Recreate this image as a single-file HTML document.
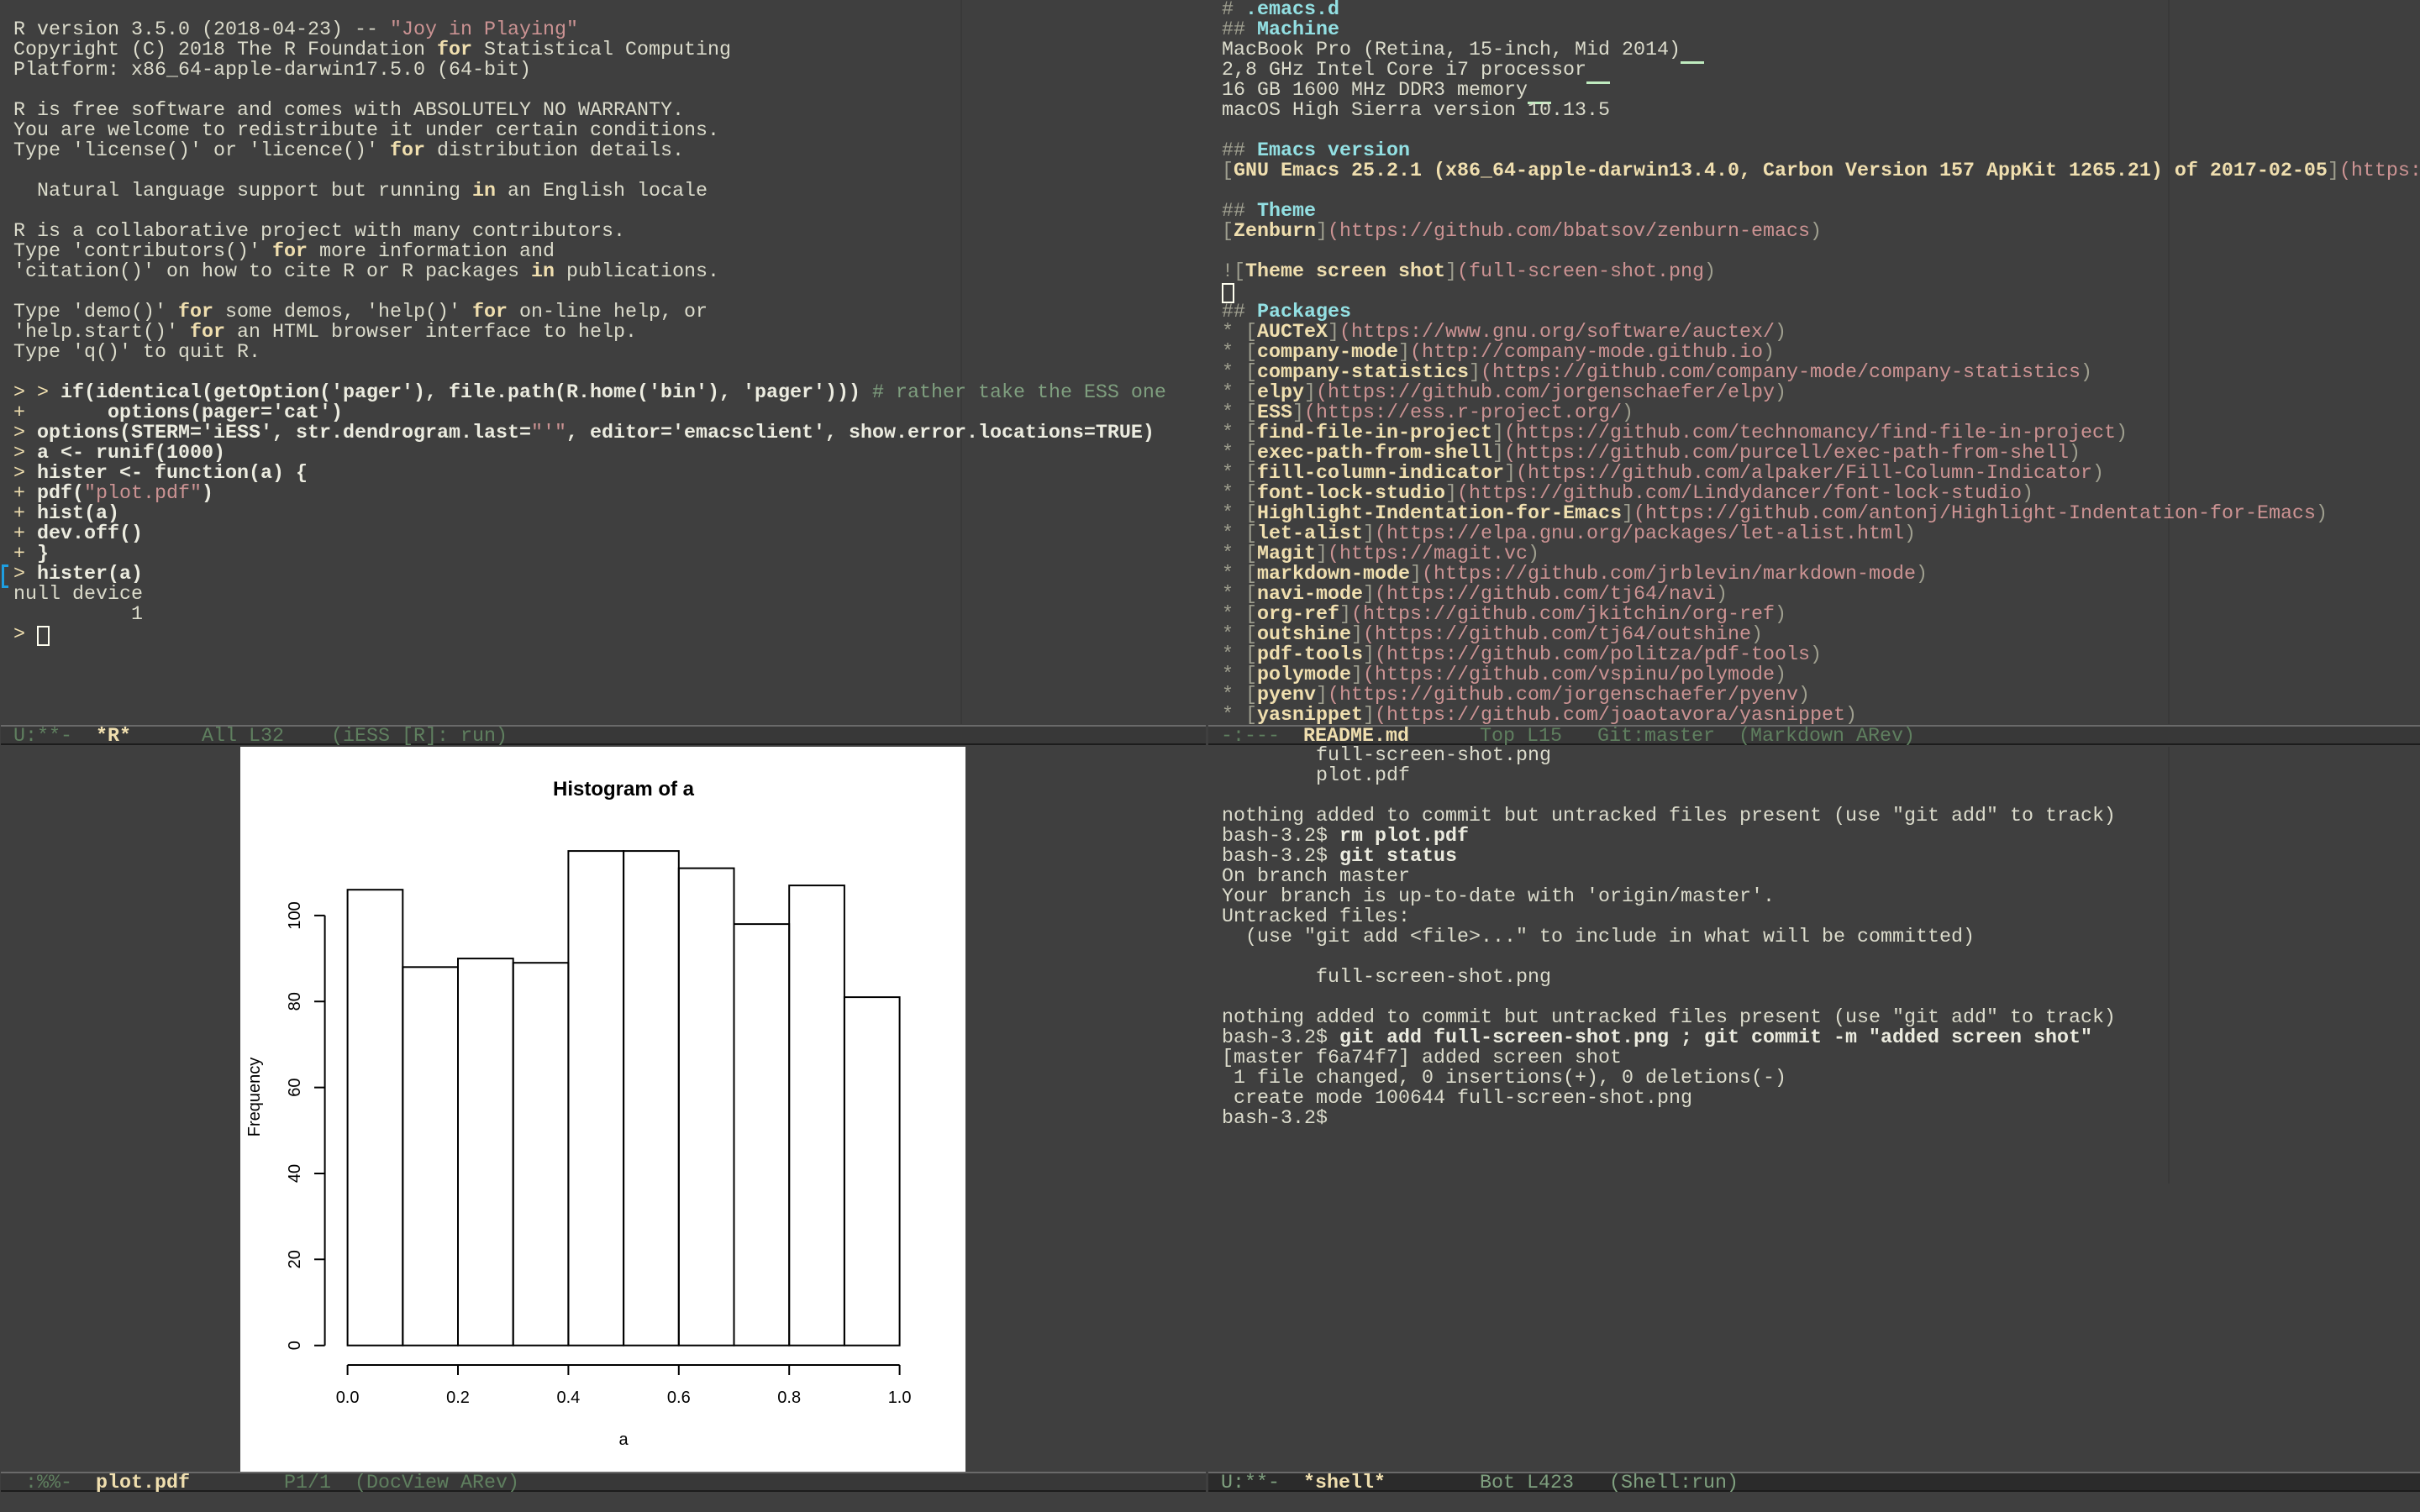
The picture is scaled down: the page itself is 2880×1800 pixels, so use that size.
<!DOCTYPE html>
<html><head><meta charset="utf-8">
<style>
html,body{margin:0;padding:0;}
body{width:2880px;height:1800px;background:#3f3f3f;position:relative;overflow:hidden;
font-family:"Liberation Mono",monospace;font-size:23.33px;color:#dcdccc;}
pre{margin:0;font:inherit;line-height:24px;white-space:pre;position:absolute;overflow:hidden;}
.k{color:#f0dfaf;font-weight:bold}
.b{font-weight:bold;color:#ecece0}
.s{color:#cc9393}
.c{color:#7f9f7f}
.h{color:#93e0e3;font-weight:bold}
.hm{color:#a0a090}
.g{color:#9f9f8f}
.l{color:#f0dfaf;font-weight:bold}
.u{color:#cc9393}
.p{color:#f0dfaf}
.tw{border-bottom:3px solid #bfebbf}
.ml{position:absolute;height:20px;background:#383838;border-top:2px solid #6a6a6a;border-bottom:2px solid #1c1c1c;color:#5f7f5f;}
.ml pre{position:static;line-height:20px;}
.ml.act{background:#2b2b2b;color:#7fa07f}
.bn{color:#f0dfaf;font-weight:bold}
.fc{position:absolute;width:2px;background:#393939}
</style></head><body>

<div class="fc" style="left:1143px;top:0;height:862px"></div>
<div class="fc" style="left:2580px;top:0;height:862px"></div>
<div class="fc" style="left:2580px;top:889px;height:520px"></div>

<pre style="left:16px;top:0;width:1420px;height:862px">

R version 3.5.0 (2018-04-23) -- <span class="s">"Joy in Playing"</span>
Copyright (C) 2018 The R Foundation <span class="k">for</span> Statistical Computing
Platform: x86_64-apple-darwin17.5.0 (64-bit)

R is free software and comes with ABSOLUTELY NO WARRANTY.
You are welcome to redistribute it under certain conditions.
Type 'license()' or 'licence()' <span class="k">for</span> distribution details.

  Natural language support but running <span class="k">in</span> an English locale

R is a collaborative project with many contributors.
Type 'contributors()' <span class="k">for</span> more information and
'citation()' on how to cite R or R packages <span class="k">in</span> publications.

Type 'demo()' <span class="k">for</span> some demos, 'help()' <span class="k">for</span> on-line help, or
'help.start()' <span class="k">for</span> an HTML browser interface to help.
Type 'q()' to quit R.

<span class="p">&gt; &gt; </span><span class="b">if(identical(getOption('pager'), file.path(R.home('bin'), 'pager')))</span> <span class="c"># rather take the ESS one</span>
<span class="p">+ </span><span class="b">      options(pager='cat')</span>
<span class="p">&gt; </span><span class="b">options(STERM='iESS', str.dendrogram.last=</span><span class="s">"'"</span><span class="b">, editor='emacsclient', show.error.locations=TRUE)</span>
<span class="p">&gt; </span><span class="b">a &lt;- runif(1000)</span>
<span class="p">&gt; </span><span class="b">hister &lt;- function(a) {</span>
<span class="p">+ </span><span class="b">pdf(</span><span class="s">"plot.pdf"</span><span class="b">)</span>
<span class="p">+ </span><span class="b">hist(a)</span>
<span class="p">+ </span><span class="b">dev.off()</span>
<span class="p">+ </span><span class="b">}</span>
<span class="p">&gt; </span><span class="b">hister(a)</span>
null device
          1
<span class="p">&gt; </span></pre>
<div style="position:absolute;left:44px;top:745px;width:11px;height:20px;border:2px solid #fffff0"></div>
<div style="position:absolute;left:2px;top:672px;width:5px;height:22px;border:3px solid #1e9ee0;border-right:none"></div>

<pre style="left:1454px;top:0;width:1426px;height:862px">
<span class="hm">#</span> <span class="h">.emacs.d</span>
<span class="hm">##</span> <span class="h">Machine</span>
MacBook Pro (Retina, 15-inch, Mid 2014)<span class="tw">  </span>
2,8 GHz Intel Core i7 processor<span class="tw">  </span>
16 GB 1600 MHz DDR3 memory<span class="tw">  </span>
macOS High Sierra version 10.13.5

<span class="hm">##</span> <span class="h">Emacs version</span>
<span class="g">[</span><span class="l">GNU Emacs 25.2.1 (x86_64-apple-darwin13.4.0, Carbon Version 157 AppKit 1265.21) of 2017-02-05</span><span class="g">]</span><span class="u">(https://www.gnu.org/software/emacs/</span>

<span class="hm">##</span> <span class="h">Theme</span>
<span class="g">[</span><span class="l">Zenburn</span><span class="g">]</span><span class="u">(https://github.com/bbatsov/zenburn-emacs</span><span class="g">)</span>

<span class="g">![</span><span class="l">Theme screen shot</span><span class="g">]</span><span class="u">(full-screen-shot.png</span><span class="g">)</span>

<span class="hm">##</span> <span class="h">Packages</span>
<span class="g">* [</span><span class="l">AUCTeX</span><span class="g">]</span><span class="u">(https://www.gnu.org/software/auctex/</span><span class="g">)</span>
<span class="g">* [</span><span class="l">company-mode</span><span class="g">]</span><span class="u">(http://company-mode.github.io</span><span class="g">)</span>
<span class="g">* [</span><span class="l">company-statistics</span><span class="g">]</span><span class="u">(https://github.com/company-mode/company-statistics</span><span class="g">)</span>
<span class="g">* [</span><span class="l">elpy</span><span class="g">]</span><span class="u">(https://github.com/jorgenschaefer/elpy</span><span class="g">)</span>
<span class="g">* [</span><span class="l">ESS</span><span class="g">]</span><span class="u">(https://ess.r-project.org/</span><span class="g">)</span>
<span class="g">* [</span><span class="l">find-file-in-project</span><span class="g">]</span><span class="u">(https://github.com/technomancy/find-file-in-project</span><span class="g">)</span>
<span class="g">* [</span><span class="l">exec-path-from-shell</span><span class="g">]</span><span class="u">(https://github.com/purcell/exec-path-from-shell</span><span class="g">)</span>
<span class="g">* [</span><span class="l">fill-column-indicator</span><span class="g">]</span><span class="u">(https://github.com/alpaker/Fill-Column-Indicator</span><span class="g">)</span>
<span class="g">* [</span><span class="l">font-lock-studio</span><span class="g">]</span><span class="u">(https://github.com/Lindydancer/font-lock-studio</span><span class="g">)</span>
<span class="g">* [</span><span class="l">Highlight-Indentation-for-Emacs</span><span class="g">]</span><span class="u">(https://github.com/antonj/Highlight-Indentation-for-Emacs</span><span class="g">)</span>
<span class="g">* [</span><span class="l">let-alist</span><span class="g">]</span><span class="u">(https://elpa.gnu.org/packages/let-alist.html</span><span class="g">)</span>
<span class="g">* [</span><span class="l">Magit</span><span class="g">]</span><span class="u">(https://magit.vc</span><span class="g">)</span>
<span class="g">* [</span><span class="l">markdown-mode</span><span class="g">]</span><span class="u">(https://github.com/jrblevin/markdown-mode</span><span class="g">)</span>
<span class="g">* [</span><span class="l">navi-mode</span><span class="g">]</span><span class="u">(https://github.com/tj64/navi</span><span class="g">)</span>
<span class="g">* [</span><span class="l">org-ref</span><span class="g">]</span><span class="u">(https://github.com/jkitchin/org-ref</span><span class="g">)</span>
<span class="g">* [</span><span class="l">outshine</span><span class="g">]</span><span class="u">(https://github.com/tj64/outshine</span><span class="g">)</span>
<span class="g">* [</span><span class="l">pdf-tools</span><span class="g">]</span><span class="u">(https://github.com/politza/pdf-tools</span><span class="g">)</span>
<span class="g">* [</span><span class="l">polymode</span><span class="g">]</span><span class="u">(https://github.com/vspinu/polymode</span><span class="g">)</span>
<span class="g">* [</span><span class="l">pyenv</span><span class="g">]</span><span class="u">(https://github.com/jorgenschaefer/pyenv</span><span class="g">)</span>
<span class="g">* [</span><span class="l">yasnippet</span><span class="g">]</span><span class="u">(https://github.com/joaotavora/yasnippet</span><span class="g">)</span></pre>
<div style="position:absolute;left:1454px;top:337px;width:11px;height:20px;border:2px solid #fffff0"></div>

<pre style="left:1454px;top:888px;width:1426px;height:862px">
        full-screen-shot.png
        plot.pdf

nothing added to commit but untracked files present (use "git add" to track)
bash-3.2$ <span class="b">rm plot.pdf</span>
bash-3.2$ <span class="b">git status</span>
On branch master
Your branch is up-to-date with 'origin/master'.
Untracked files:
  (use "git add &lt;file&gt;..." to include in what will be committed)

        full-screen-shot.png

nothing added to commit but untracked files present (use "git add" to track)
bash-3.2$ <span class="b">git add full-screen-shot.png ; git commit -m "added screen shot"</span>
[master f6a74f7] added screen shot
 1 file changed, 0 insertions(+), 0 deletions(-)
 create mode 100644 full-screen-shot.png
bash-3.2$ </pre>

<svg style="position:absolute;left:0;top:0" width="2880" height="1800" font-family="Liberation Sans, sans-serif">
<rect x="286" y="889" width="863" height="863" fill="#ffffff"/>
<text x="742" y="947" font-size="24" font-weight="bold" text-anchor="middle" fill="#000">Histogram of a</text>
<g fill="none" stroke="#000" stroke-width="2">
<rect x="413.6" y="1059.2" width="65.7" height="542.5"/>
<rect x="479.3" y="1151.3" width="65.7" height="450.4"/>
<rect x="545.0" y="1141.1" width="65.7" height="460.6"/>
<rect x="610.7" y="1146.2" width="65.7" height="455.5"/>
<rect x="676.4" y="1013.1" width="65.7" height="588.6"/>
<rect x="742.1" y="1013.1" width="65.7" height="588.6"/>
<rect x="807.8" y="1033.6" width="65.7" height="568.1"/>
<rect x="873.5" y="1100.1" width="65.7" height="501.6"/>
<rect x="939.2" y="1054.1" width="65.7" height="547.6"/>
<rect x="1004.9" y="1187.1" width="65.7" height="414.6"/>
<path d="M386.6 1089.9V1601.7M374 1601.7H386.6M374 1499.3H386.6M374 1397H386.6M374 1294.6H386.6M374 1192.3H386.6M374 1089.9H386.6"/>
<path d="M413.6 1625H1070.6M413.6 1625V1637M545 1625V1637M676.4 1625V1637M807.8 1625V1637M939.2 1625V1637M1070.6 1625V1637"/>
</g>
<g font-size="20" fill="#000" text-anchor="middle">
<text x="413.6" y="1670">0.0</text><text x="545" y="1670">0.2</text><text x="676.4" y="1670">0.4</text>
<text x="807.8" y="1670">0.6</text><text x="939.2" y="1670">0.8</text><text x="1070.6" y="1670">1.0</text>
<text x="742" y="1720">a</text>
<text transform="translate(357,1601.7) rotate(-90)">0</text>
<text transform="translate(357,1499.3) rotate(-90)">20</text>
<text transform="translate(357,1397) rotate(-90)">40</text>
<text transform="translate(357,1294.6) rotate(-90)">60</text>
<text transform="translate(357,1192.3) rotate(-90)">80</text>
<text transform="translate(357,1089.9) rotate(-90)">100</text>
<text transform="translate(309,1306) rotate(-90)">Frequency</text>
</g>
</svg>

<div class="ml" style="left:1px;top:863px;width:1434px;"><pre style="padding-left:15px;padding-top:2px"><span>U:**-  </span><span class="bn">*R*</span>      All L32    (iESS [R]: run)</pre></div>
<div class="ml" style="left:1438px;top:863px;width:1442px;"><pre style="padding-left:15px;padding-top:2px">-:---  <span class="bn">README.md</span>      Top L15   Git:master  (Markdown ARev)</pre></div>
<div class="ml" style="left:1px;top:1752px;width:1434px;"><pre style="padding-left:15px;padding-top:2px"> :%%-  <span class="bn">plot.pdf</span>        P1/1  (DocView ARev)</pre></div>
<div class="ml act" style="left:1438px;top:1752px;width:1442px;"><pre style="padding-left:15px;padding-top:2px">U:**-  <span class="bn">*shell*</span>        Bot L423   (Shell:run)</pre></div>

</body></html>
